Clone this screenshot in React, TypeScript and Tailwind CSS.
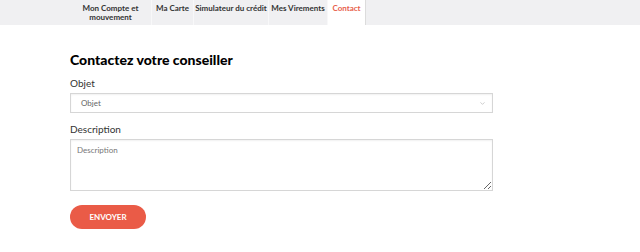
import { ChevronDown } from "lucide-react";

const tabs = [
  { label: "Mon Compte et mouvement", w: "w-[82px]", two: true },
  { label: "Ma Carte", w: "w-[42px]" },
  { label: "Simulateur du crédit", w: "w-[75px]" },
  { label: "Mes Virements", w: "w-[59px]" },
];

export default function App() {
  return (
    <div className="min-h-[252px] w-[640px] bg-white font-['Lato',sans-serif] text-[#333]">
      {/* Nav */}
      <div className="flex h-[25px] bg-[#f0f0f2] pl-[70px]">
        {tabs.map((t) => (
          <div
            key={t.label}
            className={`${t.w} border-r border-[#f8f8f9] pt-[4px] text-center text-[8px] font-bold leading-[9px] text-[#333]`}
          >
            {t.two ? (
              <>
                Mon Compte et
                <br />
                mouvement
              </>
            ) : (
              t.label
            )}
          </div>
        ))}
        <div className="w-[38px] border-r border-[#dcdcdc] bg-white pt-[4px] text-center text-[8px] font-bold leading-[9px] text-[#e8604c]">
          Contact
        </div>
      </div>

      {/* Form */}
      <div className="w-[423px] ml-[70px] pt-[25px]">
        <h1 className="text-[14px] font-black leading-[20px] text-black">Contactez votre conseiller</h1>
        <label className="mt-[6px] block text-[10px] leading-[14px]">Objet</label>
        <div className="mt-[3px] flex h-[20px] items-center justify-between border border-[#d6d6d6] pl-[10px] pr-[6px] shadow-[inset_0_1px_2px_rgba(0,0,0,0.06)]">
          <span className="text-[8px] text-[#666]">Objet</span>
          <ChevronDown className="h-[7px] w-[7px] text-[#aaa]" />
        </div>
        <label className="mt-[9px] block text-[10px] leading-[14px]">Description</label>
        <textarea
          placeholder="Description"
          className="mt-[3px] block h-[52px] w-full border border-[#d6d6d6] px-[6px] py-[4px] text-[8px] text-[#666] placeholder:text-[#777] shadow-[inset_0_1px_2px_rgba(0,0,0,0.06)] outline-none"
        />
        <button className="mt-[14px] flex h-[24px] w-[76px] items-center justify-center rounded-full bg-[#ea5b47] text-[8px] font-bold text-white">
          ENVOYER
        </button>
      </div>
    </div>
  );
}
